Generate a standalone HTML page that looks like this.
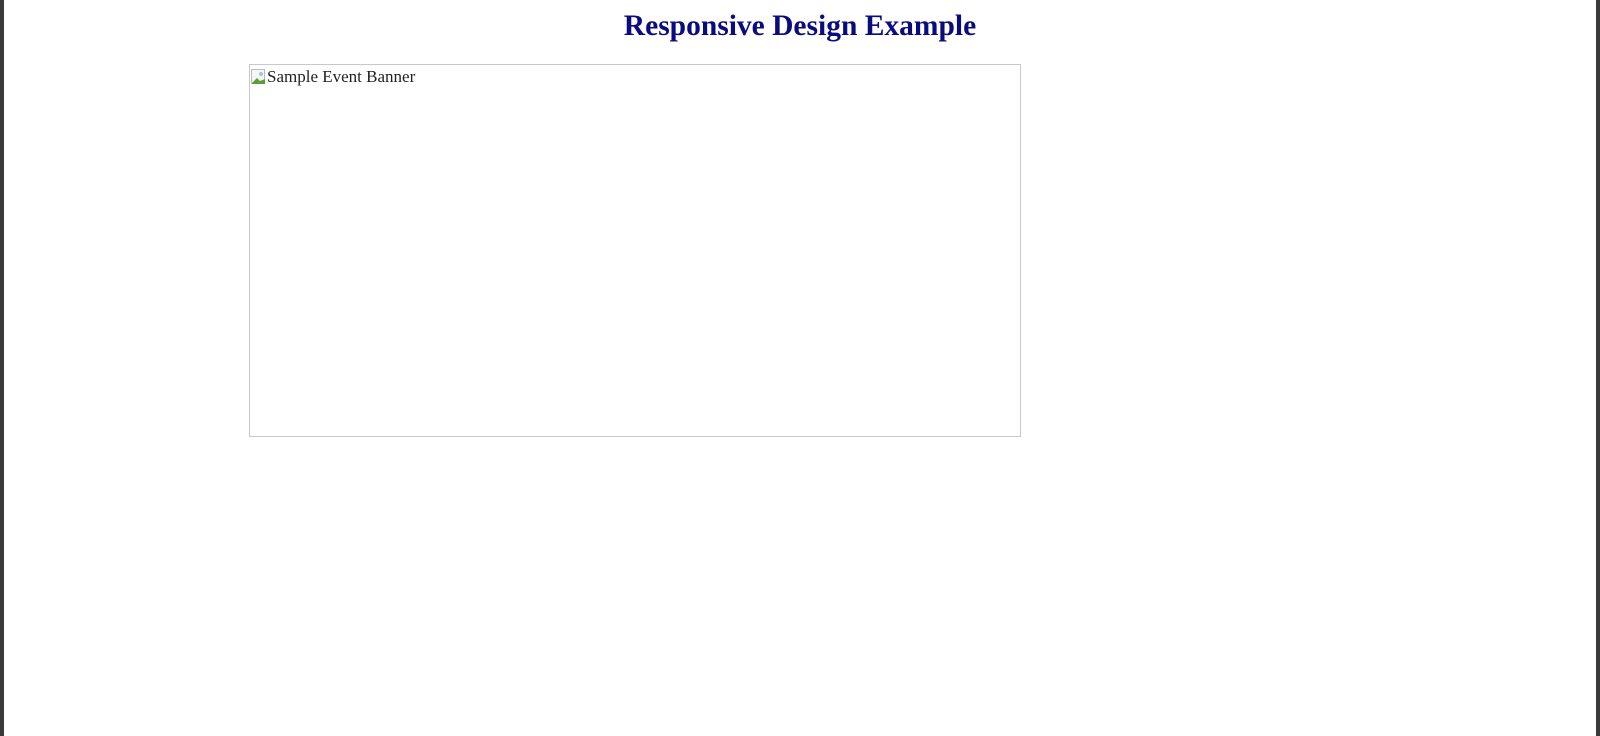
<!DOCTYPE html>
<html><head><meta charset="utf-8"><style>
html,body{margin:0;padding:0;width:1600px;height:736px;overflow:hidden;background:#fff;}
.lb{position:absolute;left:0;top:0;width:4px;height:736px;background:#3a3a3a;}
.rb{position:absolute;left:1596px;top:0;width:4px;height:736px;background:#3a3a3a;}
h1{position:absolute;left:20px;width:1560px;top:8px;margin:0;text-align:center;font:bold 29.5px "Liberation Serif",serif;color:#0b0b80;line-height:36px;}
.img{position:absolute;left:249px;top:64px;width:770px;height:371px;border:1px solid #c8c8c8;}
.alt{position:absolute;left:1px;top:2px;font:17px "Liberation Serif",serif;color:#222;white-space:nowrap;}
.ic{display:inline-block;width:16px;height:16px;vertical-align:-3px;position:relative;}
</style></head><body>
<div class="lb"></div><div class="rb"></div>
<h1>Responsive Design Example</h1>
<div class="img"><div class="alt"><span class="ic"><svg width="16" height="16"><rect x="0.5" y="0.5" width="13" height="14" fill="#f4f6f8" stroke="#bbb"/><path d="M1 14 L6 9 L9 12 L14 10 L14 15 L1 15Z" fill="#5a9e3a"/><circle cx="10" cy="5" r="2" fill="#9cc"/></svg></span>Sample Event Banner</div></div>
</body></html>
